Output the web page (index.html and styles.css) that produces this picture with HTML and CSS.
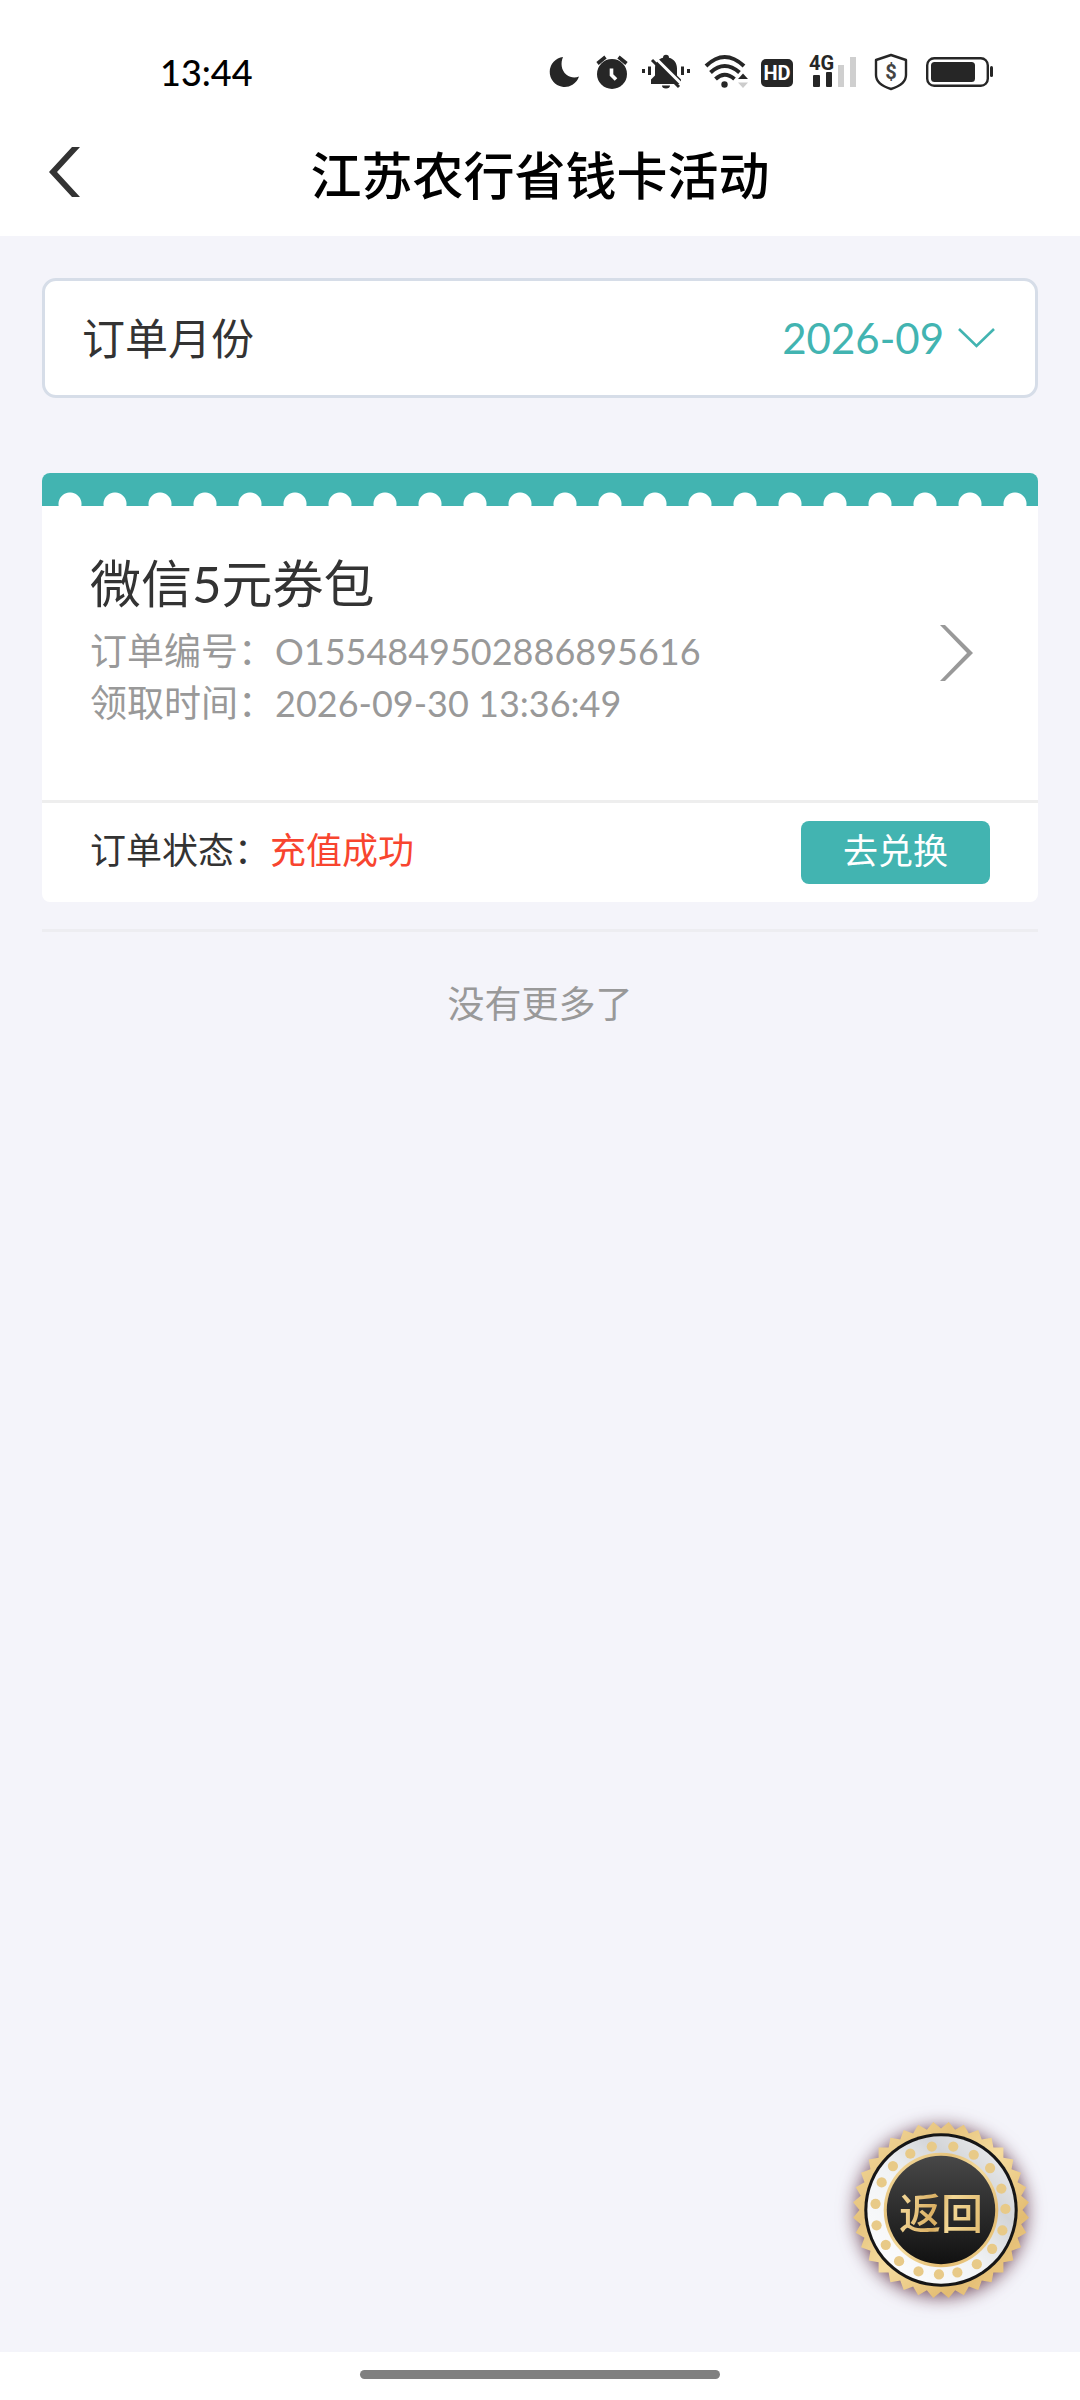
FILE: index.html
```html
<!DOCTYPE html>
<html lang="zh-CN">
<head>
<meta charset="utf-8">
<meta name="viewport" content="width=device-width, initial-scale=1">
<title>江苏农行省钱卡活动</title>
<link rel="stylesheet" href="styles.css">
</head>
<body>
<div class="page">
  <header class="top">
    <div class="status-bar">
      <time class="clock">13:44</time>
      <div class="status-icons" aria-hidden="true">
        <svg width="30" height="36" viewBox="548 54 30 36"><path d="M562 57a15 15 0 1 0 16 19.500c-3.500 1.500-8.500 1.500-12.500-1.800-5.500-4.500-6-12-3.500-17.700z"/></svg>
        <svg width="30" height="36" viewBox="595 54 30 36"><circle cx="612" cy="74" r="15"/><path d="M597.500 63.500l8-6.500M626.500 63.500l-8-6.500" stroke="#262626" stroke-width="3.600"/><path d="M611.500 68.500v6.500l4.500 4.500" fill="none" stroke="#fff" stroke-width="3.600"/></svg>
        <svg width="46" height="36" viewBox="641 54 46 36"><path d="M651 84v-4.500l4-4v-7c0-5.500 3-9.500 8-10.800a3 3 0 0 1 6 0c5 1.300 8 5.300 8 10.800v7l4 4V84zM662 85.500h8a4 3 0 0 1-8 0z"/><path d="M642 69h3v4h-3zM648 66.500h3v8.500h-3zM681 66.500h3v8.500h-3zM687 69h3v4h-3z"/><path d="M655 57.500l27 27" stroke="#fff" stroke-width="3"/><path d="M652 60l27 27" stroke="#262626" stroke-width="3"/></svg>
        <svg width="42" height="36" viewBox="703 54 42 36"><path d="M706 66q18.500-18 38 0M710.500 72.500q14-13 29 0M715.500 79q9-8.500 19 0" fill="none" stroke="#262626" stroke-width="4"/><circle cx="724.500" cy="84.500" r="3.200"/><path d="M738 79l5-5.500 5 5.500z"/><path d="M738 82.500l5 5.500 5-5.500z" fill="#ccc"/></svg>
        <svg width="33" height="36" viewBox="761 54 33 36"><rect x="761" y="59" width="32" height="28" rx="5"/><text class="hd" x="777" y="80" text-anchor="middle">HD</text></svg>
        <svg width="48" height="36" viewBox="810 54 48 36"><text class="net" x="809" y="70">4G</text><rect x="813" y="75" width="7" height="12" rx="1"/><rect x="826" y="72" width="6" height="15" rx="1"/><g fill="#cfcfcf"><rect x="838" y="65" width="6" height="22"/><rect x="850" y="57" width="6" height="30"/></g></svg>
        <svg width="36" height="36" viewBox="874 54 36 36"><path d="M891 55l15 5v15c0 7-7 11.500-15 14-8-2.500-15-7-15-14V60z" fill="none" stroke="#262626" stroke-width="2.400" stroke-linejoin="round"/><text class="coin" x="891" y="79" text-anchor="middle">$</text></svg>
        <svg width="66" height="36" viewBox="926 54 66 36"><rect x="927.200" y="58.200" width="60.600" height="27.600" rx="7" fill="none" stroke="#262626" stroke-width="2.400"/><rect x="931" y="62" width="44" height="20" rx="3.500"/><rect x="990" y="66" width="3" height="11" rx="1.500"/></svg>
      </div>
    </div>
    <div class="title-bar">
      <button class="back" type="button" aria-label="后退"><svg width="34" height="50" viewBox="0 0 34 50"><path d="M24 0h8L9 25l23 25h-8L1 25z" fill="#333"/></svg></button>
      <h1 class="title">江苏农行省钱卡活动</h1>
    </div>
  </header>

  <main class="content">
    <div class="month">
      <label class="month-label" for="month">订单月份</label>
      <select class="month-value" id="month"><option>2026-09</option></select>
      <svg class="month-arrow" width="37" height="22" viewBox="0 0 37 22" aria-hidden="true"><path d="M1 2l17.500 17L36 2" fill="none" stroke="#42b4b1" stroke-width="2.600"/></svg>
    </div>

    <article class="ticket">
      <div class="ticket-edge"></div>
      <a class="ticket-main" href="#order">
        <div class="ticket-text">
          <h2 class="ticket-title">微信5元券包</h2>
          <p class="ticket-line">订单编号：<span class="ticket-data">O1554849502886895616</span></p>
          <p class="ticket-line">领取时间：<span class="ticket-data">2026-09-30 13:36:49</span></p>
        </div>
        <svg width="34" height="56" viewBox="0 0 34 56" aria-hidden="true"><path d="M0 0h5l28 28L5 56H0l27-28z" fill="#999"/></svg>
      </a>
      <div class="ticket-foot">
        <p class="state">订单状态：<span class="state-value">充值成功</span></p>
        <button class="redeem" type="button">去兑换</button>
      </div>
    </article>

    <p class="list-end">没有更多了</p>
  </main>

  <button class="badge" type="button">
    <svg class="badge-art" width="178" height="178" viewBox="-87 -87 174 174" aria-hidden="true">
      <defs>
        <linearGradient id="gold" x1="0" y1="0" x2="1" y2="1"><stop offset="0" stop-color="#f6dfa6"/><stop offset=".3" stop-color="#e6c37c"/><stop offset=".5" stop-color="#f5dc9f"/><stop offset=".75" stop-color="#e3bc72"/><stop offset="1" stop-color="#f3d693"/></linearGradient>
        <linearGradient id="silver" x1="0" y1="1" x2="1" y2="0"><stop offset="0" stop-color="#fff"/><stop offset=".45" stop-color="#f1f3f5"/><stop offset=".7" stop-color="#d3d5d8"/><stop offset="1" stop-color="#f4f5f6"/></linearGradient>
        <linearGradient id="dark" x1="0" y1="0" x2="0" y2="1"><stop offset="0" stop-color="#484848"/><stop offset="1" stop-color="#111"/></linearGradient>
        <clipPath id="teeth">
          <rect x="-61" y="-61" width="122" height="122"/>
          <rect x="-61" y="-61" width="122" height="122" transform="rotate(10)"/>
          <rect x="-61" y="-61" width="122" height="122" transform="rotate(20)"/>
          <rect x="-61" y="-61" width="122" height="122" transform="rotate(30)"/>
          <rect x="-61" y="-61" width="122" height="122" transform="rotate(40)"/>
          <rect x="-61" y="-61" width="122" height="122" transform="rotate(50)"/>
          <rect x="-61" y="-61" width="122" height="122" transform="rotate(60)"/>
          <rect x="-61" y="-61" width="122" height="122" transform="rotate(70)"/>
          <rect x="-61" y="-61" width="122" height="122" transform="rotate(80)"/>
        </clipPath>
      </defs>
      <rect x="-87" y="-87" width="174" height="174" fill="url(#gold)" clip-path="url(#teeth)"/>
      <circle r="75" fill="#161616"/>
      <circle r="72" fill="url(#silver)"/>
      <g fill="#e8ca88">
        <circle cx="12" cy="-62" r="5"/><circle cx="32" cy="-54" r="5"/><circle cx="48" cy="-41" r="5"/><circle cx="59" cy="-21" r="5"/><circle cx="63" cy="-1" r="5"/><circle cx="60" cy="20" r="5"/><circle cx="50" cy="38" r="5"/><circle cx="35" cy="53" r="5"/><circle cx="16" cy="61" r="5"/><circle cx="-2" cy="63" r="5"/><circle cx="-22" cy="60" r="5"/><circle cx="-41" cy="50" r="5"/><circle cx="-54" cy="34" r="5"/><circle cx="-63" cy="15" r="5"/><circle cx="-64" cy="-6" r="5"/><circle cx="-58" cy="-27" r="5"/><circle cx="-47" cy="-43" r="5"/><circle cx="-30" cy="-55" r="5"/><circle cx="-9" cy="-62" r="5"/>
      </g>
      <circle r="56" fill="url(#gold)"/>
      <circle r="53" fill="url(#dark)"/>
    </svg>
    <span class="badge-text">返回</span>
  </button>

  <footer class="home-bar"><div class="home-pill"></div></footer>
</div>
</body>
</html>
```
FILE: styles.css
```css
* { box-sizing: border-box; }

body {
  margin: 0;
  background: #f4f4fa;
  color: #333;
  font-family: Lato, "Noto Sans CJK SC", sans-serif;
}

h1, h2, p { margin: 0; font-weight: 400; }

button, select {
  margin: 0;
  padding: 0;
  border: 0;
  background: none;
  color: inherit;
  font: inherit;
}

svg { display: block; overflow: visible; }

.page {
  position: relative;
  display: flex;
  flex-direction: column;
  min-height: 100vh;
}

.top { background: #fff; }

.status-bar {
  display: flex;
  align-items: center;
  justify-content: space-between;
  height: 112px;
  padding: 32px 88px 0 160px;
}

.clock {
  color: #000;
  font-size: 36px;
  font-weight: 500;
  line-height: 44px;
}

.status-icons {
  display: flex;
  gap: 16px;
  fill: #262626;
}

.hd, .net, .coin {
  font-family: "Liberation Sans Narrow", Roboto, sans-serif;
  font-weight: 700;
}
.hd { font-size: 20px; fill: #fff; }
.net { font-size: 20px; }
.coin { font-family: Roboto, sans-serif; font-size: 20px; fill: #444; }

.title-bar {
  display: grid;
  grid-template-columns: 82px 1fr 82px;
  align-items: center;
  height: 124px;
  padding-bottom: 4px;
}

.back { padding-left: 48px; cursor: pointer; }

.title {
  padding-top: 8px;
  color: #000;
  font-size: 51px;
  font-weight: 500;
  line-height: 72px;
  text-align: center;
}

.content {
  flex: 1;
  padding: 42px 42px 0;
}

.month {
  display: flex;
  align-items: center;
  height: 120px;
  padding: 0 40px 0 37px;
  border: 3px solid #d6dde8;
  border-radius: 14px;
  background: #fff;
}

.month-label {
  padding-bottom: 4px;
  font-size: 43px;
}

.month-value {
  flex: 1;
  margin-right: 14px;
  appearance: none;
  color: #42b4b1;
  font-size: 42px;
  text-align-last: right;
}

.ticket {
  margin-top: 75px;
  overflow: hidden;
  border-radius: 8px;
  background: #fff;
}

/* Perforated strip: white half-circles repeat along the lower edge. */
.ticket-edge {
  height: 33px;
  background: radial-gradient(circle at 22px 31px, #fff 11px, #42b4b1 12px) 6px 0 / 45px 33px repeat-x;
}

.ticket-main {
  display: flex;
  align-items: center;
  justify-content: space-between;
  padding: 0 64px 0 48px;
  color: inherit;
  text-decoration: none;
}

.ticket-text { padding: 48px 0 71px; }

.ticket-title {
  margin-bottom: 11px;
  font-size: 51px;
  line-height: 60px;
}

.ticket-line {
  color: #999;
  font-size: 37px;
  line-height: 51px;
}

.ticket-data { font-size: 36px; }

.ticket-foot {
  display: flex;
  align-items: center;
  justify-content: space-between;
  height: 102px;
  padding: 0 48px;
  border-top: 3px solid #eee;
}

.state {
  padding-bottom: 6px;
  font-size: 36px;
  line-height: 48px;
}
.state-value { color: #f8452f; }

.redeem {
  width: 189px;
  height: 63px;
  padding-bottom: 4px;
  border-radius: 8px;
  background: #42b4b1;
  color: #fff;
  font-size: 35px;
  line-height: 59px;
}

.list-end {
  margin-top: 27px;
  padding-top: 44px;
  border-top: 3px solid #ededf1;
  color: #999;
  font-size: 37px;
  line-height: 56px;
  text-align: center;
}

/* Floating medal that stays above the page's lower right corner. */
.badge {
  position: absolute;
  right: 50px;
  bottom: 101px;
  display: grid;
  place-items: center;
  cursor: pointer;
}

.badge-art, .badge-text { grid-area: 1 / 1; }

.badge-art { filter: drop-shadow(0 2px 9px rgba(70, 15, 35, 0.75)); }

.badge-text {
  padding-top: 6px;
  background: linear-gradient(100deg, #f5dc9f, #d9ad60 45%, #f3d896 60%, #e0b96e);
  background-clip: text;
  color: transparent;
  font-size: 42px;
  font-weight: 500;
  line-height: 60px;
  z-index: 1;
}

.home-bar {
  display: flex;
  justify-content: center;
  height: 48px;
  padding-top: 18px;
  background: #fff;
}

.home-pill {
  width: 360px;
  height: 9px;
  border-radius: 5px;
  background: #808080;
}
```
